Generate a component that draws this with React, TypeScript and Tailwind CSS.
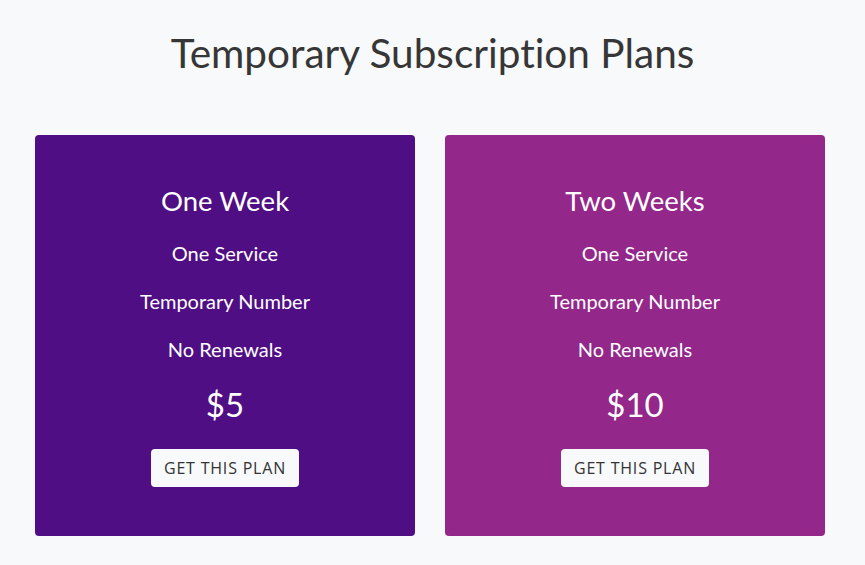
const PLANS = [
  { name: "One Week", price: "$5", bg: "bg-[#4f0e84]" },
  { name: "Two Weeks", price: "$10", bg: "bg-[#93278a]" },
];

const FEATURES = ["One Service", "Temporary Number", "No Renewals"];

export default function App() {
  return (
    <div className="min-h-[565px] w-[865px] bg-[#f8f9fa] font-['Lato',sans-serif] [font-variant-ligatures:none]">
      <h1 className="pt-[29px] text-center text-[40.5px] leading-[48px] text-[#363636]">
        Temporary Subscription Plans
      </h1>
      <div className="mt-[58px] flex gap-[30px] pl-[35px]">
        {PLANS.map((p) => (
          <div
            key={p.name}
            className={`${p.bg} flex h-[401px] w-[380px] flex-col items-center rounded-[4px] pt-[50px] text-white`}
          >
            <h2 className="text-[27.5px] leading-[32px]">{p.name}</h2>
            <div className="mt-[12px] flex flex-col items-center">
              {FEATURES.map((f) => (
                <p key={f} className="h-[48px] text-[20px] leading-[48px]">
                  {f}
                </p>
              ))}
            </div>
            <div className="mt-[10px] text-[33px] leading-[42px]">{p.price}</div>
            <button className="mt-[24px] h-[38px] w-[148px] rounded-[4px] bg-[#f8f9fa] font-['Open_Sans',sans-serif] text-[16px] uppercase tracking-[0.8px] text-[#333]">
              Get this plan
            </button>
          </div>
        ))}
      </div>
    </div>
  );
}
